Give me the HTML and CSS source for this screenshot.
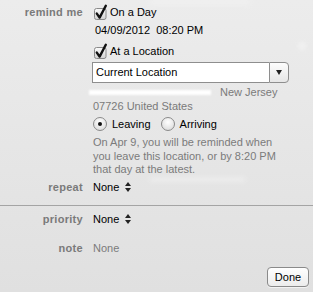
FILE: index.html
```html
<!DOCTYPE html>
<html>
<head>
<meta charset="utf-8">
<link rel="stylesheet" href="styles.css">
</head>
<body>
<main class="sheet">
  <span class="glow glow-top"></span>
  <span class="glow glow-dot"></span>
  <section class="field">
    <div class="label">remind me</div>
    <div class="value stack">
      <label class="check">
        <svg class="cb" width="15" height="16" viewBox="0 0 15 16"><defs><linearGradient id="g1" x1="0" y1="0" x2="0" y2="1"><stop offset="0" stop-color="#fbfbfb"/><stop offset="1" stop-color="#d2d2d2"/></linearGradient></defs><rect x="1.5" y="4.5" width="11.5" height="11" rx="2" fill="url(#g1)" stroke="#8a8a8a"/><path d="M3.8 9.6 L6.6 13.6 L12.8 1.8" fill="none" stroke="#111" stroke-width="2.4" stroke-linecap="round" stroke-linejoin="round"/></svg>
        <span>On a Day</span>
      </label>
      <div class="date">04/09/2012&nbsp; 08:20 PM</div>
      <label class="check loc">
        <svg class="cb" width="15" height="16" viewBox="0 0 15 16"><defs><linearGradient id="g2" x1="0" y1="0" x2="0" y2="1"><stop offset="0" stop-color="#fbfbfb"/><stop offset="1" stop-color="#d2d2d2"/></linearGradient></defs><rect x="1.5" y="4.5" width="11.5" height="11" rx="2" fill="url(#g2)" stroke="#8a8a8a"/><path d="M3.8 9.6 L6.6 13.6 L12.8 1.8" fill="none" stroke="#111" stroke-width="2.4" stroke-linecap="round" stroke-linejoin="round"/></svg>
        <span>At a Location</span>
      </label>
      <div class="combo">
        <span class="combo-text">Current Location</span>
        <span class="combo-btn"><i class="tri-down"></i></span>
      </div>
      <div class="addr">
        <div class="addr-line"><span class="redact"></span><span>New Jersey</span></div>
        <div class="addr-line">07726 United States</div>
      </div>
      <div class="radios">
        <label class="radio"><span class="rb on"></span><span>Leaving</span></label>
        <label class="radio"><span class="rb"></span><span>Arriving</span></label>
      </div>
      <p class="hint">On Apr 9, you will be reminded when<br>you leave this location, or by 8:20 PM<br>that day at the latest.</p>
    </div>
  </section>
  <section class="field row repeat">
    <div class="label">repeat</div>
    <div class="value"><span>None</span><span class="stepper"><i class="up"></i><i class="down"></i></span><span class="glow glow-rep"></span></div>
  </section>
  <div class="sep"></div>
  <section class="field row priority">
    <div class="label">priority</div>
    <div class="value"><span>None</span><span class="stepper"><i class="up"></i><i class="down"></i></span></div>
  </section>
  <section class="field row note">
    <div class="label">note</div>
    <div class="value muted">None</div>
  </section>
  <footer class="actions">
    <button class="done">Done</button>
  </footer>
</main>
</body>
</html>
```
FILE: styles.css
```css
html, body {
  margin: 0;
  padding: 0;
}
body {
  width: 313px;
  height: 292px;
  overflow: hidden;
  background: linear-gradient(#ececec, #e0e0e0);
  font-family: "Liberation Sans", Arial, sans-serif;
  font-size: 11px;
  color: #000;
}
.sheet {
  position: relative;
  padding-top: 4px;
  height: 288px;
}
.field {
  display: grid;
  grid-template-columns: 83px 1fr;
  column-gap: 10px;
}
.label {
  text-align: right;
  font-weight: bold;
  color: #7a7a7a;
  letter-spacing: 0.3px;
  line-height: 16px;
}
.stack {
  display: flex;
  flex-direction: column;
  align-items: flex-start;
}
.check {
  display: flex;
  align-items: center;
  height: 16px;
  gap: 2px;
  line-height: 16px;
}
.cb {
  display: block;
  flex: none;
}
.date {
  margin-top: 3px;
  line-height: 14px;
  padding-left: 2px;
}
.check.loc {
  margin-top: 6px;
}
.combo {
  margin-top: 3px;
  margin-left: -1px;
  width: 197px;
  height: 21px;
  display: flex;
}
.combo-text {
  flex: 1;
  border: 1px solid #8e8e8e;
  border-right: none;
  background: #fff;
  padding-left: 3px;
  line-height: 19px;
}
.combo-btn {
  width: 18px;
  border: 1px solid #8e8e8e;
  border-radius: 0 4px 4px 0;
  background: linear-gradient(#fdfdfd, #e6e6e6);
  display: flex;
  align-items: center;
  justify-content: center;
}
.tri-down {
  width: 0;
  height: 0;
  border-left: 3.5px solid transparent;
  border-right: 3.5px solid transparent;
  border-top: 5px solid #222;
}
.addr {
  margin-top: 2px;
  color: #7a7a7a;
}
.addr-line {
  line-height: 14px;
  display: flex;
  align-items: center;
}
.redact {
  display: inline-block;
  width: 122px;
  height: 5px;
  margin-left: -4px;
  margin-right: 9px;
  background: #fff;
  filter: blur(1px);
}
.radios {
  margin-top: 3px;
  display: flex;
  gap: 10px;
  height: 16px;
  align-items: center;
}
.radio {
  display: flex;
  align-items: center;
  gap: 5px;
}
.rb {
  width: 14px;
  height: 14px;
  box-sizing: border-box;
  border: 1px solid #8a8a8a;
  border-radius: 50%;
  background: radial-gradient(circle at 50% 35%, #ffffff, #e2e2e2 70%, #d0d0d0);
  display: flex;
  align-items: center;
  justify-content: center;
}
.rb.on::after {
  content: "";
  width: 4px;
  height: 4px;
  border-radius: 50%;
  background: #111;
}
.hint {
  margin: 4px 0 0;
  line-height: 13.5px;
  color: #7b7b7b;
}
.row .label {
  line-height: 14px;
}
.row .value {
  display: flex;
  align-items: center;
  line-height: 14px;
  position: relative;
}
.repeat {
  margin-top: 3px;
}
.stepper {
  display: inline-flex;
  flex-direction: column;
  gap: 2px;
  margin-left: 6px;
}
.stepper i {
  display: block;
  width: 0;
  height: 0;
  border-left: 3px solid transparent;
  border-right: 3px solid transparent;
}
.stepper .up {
  border-bottom: 4px solid #222;
}
.stepper .down {
  border-top: 4px solid #222;
}
.sep {
  margin-top: 11px;
  height: 1px;
  background: #a4a4a4;
}
.priority {
  margin-top: 6px;
}
.note {
  margin-top: 15px;
}
.muted {
  color: #7b7b7b;
}
.actions {
  margin-top: 12px;
  display: flex;
  justify-content: flex-end;
  padding-right: 4px;
}
.done {
  width: 42px;
  height: 20px;
  box-sizing: border-box;
  border: 1px solid #8a8a8a;
  border-radius: 4px;
  background: linear-gradient(#ffffff, #ececec);
  box-shadow: 0 1px 0 rgba(255,255,255,0.6);
  font-family: "Liberation Sans", Arial, sans-serif;
  font-size: 11px;
  color: #000;
  padding: 0;
}
.glow {
  position: absolute;
  background: #fff;
  pointer-events: none;
}
.glow-top {
  left: 150px;
  top: 0;
  width: 100px;
  height: 4px;
  opacity: 0.35;
  filter: blur(3px);
}
.glow-dot {
  left: 298px;
  top: 42px;
  width: 8px;
  height: 8px;
  border-radius: 50%;
  opacity: 0.35;
  filter: blur(2px);
}
.glow-rep {
  left: 57px;
  top: -3px;
  width: 95px;
  height: 5px;
  opacity: 0.3;
  filter: blur(2.5px);
}
```
